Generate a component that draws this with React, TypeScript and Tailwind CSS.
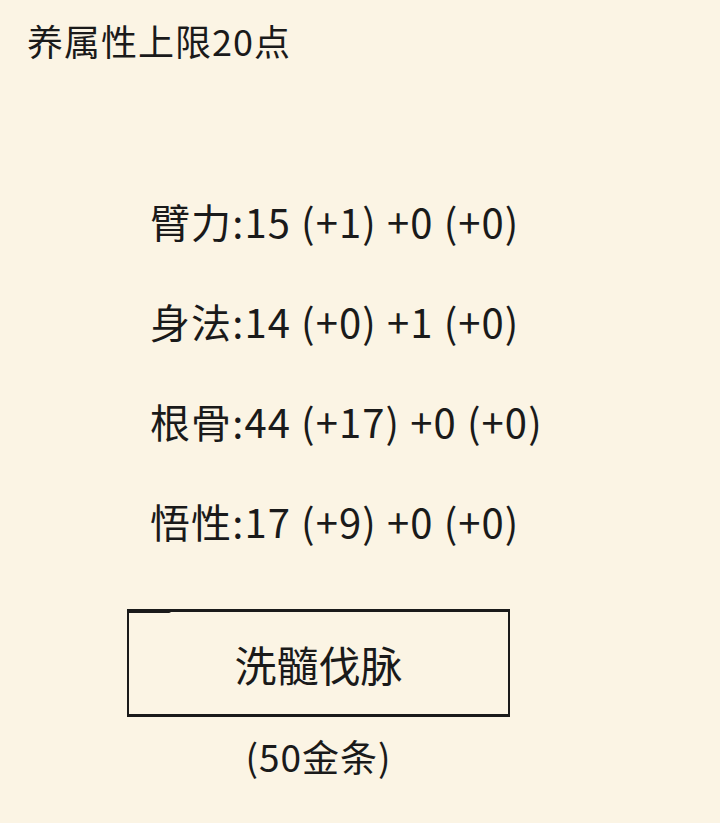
export default function App() {
  const stats = [
    "臂力:15 (+1) +0 (+0)",
    "身法:14 (+0) +1 (+0)",
    "根骨:44 (+17) +0 (+0)",
    "悟性:17 (+9) +0 (+0)",
  ];

  return (
    <div
      className="min-h-screen w-[720px] bg-[#fbf4e4] text-[#1a1a1a]"
      style={{ fontFamily: '"Noto Sans CJK SC", "Noto Sans", sans-serif' }}
    >
      {/* header */}
      <div className="pl-[27px] pt-[13px] text-[36px] leading-[54px] tracking-[1px]">养属性上限20点</div>

      {/* attribute rows */}
      <div className="mt-[104px] flex flex-col pl-[150px]">
        {stats.map((s) => (
          <div key={s} className="flex h-[100px] items-center text-[40px] tracking-[1.1px]">
            {s}
          </div>
        ))}
      </div>

      {/* action button */}
      <div className="ml-[127px] mt-[38px] w-[383px]">
        <button className="relative flex h-[108px] w-full items-center justify-center border-x-2 border-y-[3px] border-[#1a1a1a] text-[42px]">
          <span className="absolute -top-[3px] -left-[2px] h-[4px] w-[44px] rounded-r-full bg-[#1a1a1a]" />
          洗髓伐脉
        </button>
        <div className="mt-[11px] text-center text-[37px] leading-[57px] tracking-[1px]">(50金条)</div>
      </div>
    </div>
  );
}
